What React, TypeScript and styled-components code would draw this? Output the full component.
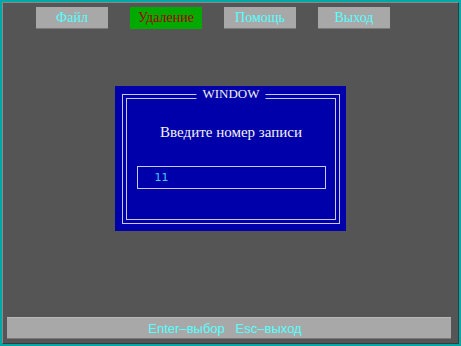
import React from "react";
import styled, { createGlobalStyle } from "styled-components";

const Global = createGlobalStyle`
  html, body {
    margin: 0;
    padding: 0;
    background: #555555;
  }
`;

const Screen = styled.div`
  box-sizing: border-box;
  width: 461px;
  height: 346px;
  border: 2px solid #00a8a8;
  background: #555555;
  display: flex;
  flex-direction: column;
  overflow: hidden;
`;

const Inner = styled.div`
  flex: 1;
  display: flex;
  flex-direction: column;
  border-top: 1px solid #8a8a8a;
  border-left: 1px solid #8a8a8a;
  border-right: 1px solid #3a3a3a;
  border-bottom: 1px solid #3a3a3a;
`;

const Menu = styled.div`
  display: flex;
  gap: 22px;
  padding: 4px 0 0 33px;
`;

const MenuItem = styled.div<{ $active?: boolean }>`
  box-sizing: border-box;
  width: 72px;
  height: 22px;
  display: flex;
  align-items: center;
  justify-content: center;
  font-family: "Liberation Serif", serif;
  font-size: 14px;
  color: ${(p) => (p.$active ? "#aa0000" : "#55ffff")};
  background: ${(p) => (p.$active ? "#00aa00" : "#a8a8a8")};
  border-bottom: ${(p) => (p.$active ? "none" : "1px solid #7a7a7a")};
`;

const Middle = styled.div`
  flex: 1;
  display: flex;
  justify-content: center;
  padding-top: 57px;
`;

const Window = styled.div`
  box-sizing: border-box;
  width: 231px;
  height: 145px;
  background: #0000aa;
  padding: 8px 6px 7px 7px;
  display: flex;
`;

const Frame = styled.div`
  position: relative;
  flex: 1;
  border: 1px solid #c8c8f0;
  padding: 3px;
  display: flex;
`;

const FrameInner = styled.div`
  flex: 1;
  border: 1px solid #c8c8f0;
  display: flex;
  flex-direction: column;
  align-items: center;
`;

const Title = styled.span`
  position: absolute;
  top: -9px;
  left: 50%;
  transform: translateX(-50%);
  background: #0000aa;
  padding: 0 6px;
  font-family: "Liberation Serif", serif;
  font-size: 13px;
  line-height: 16px;
  color: #f0f0f0;
`;

const Prompt = styled.div`
  margin-top: 25px;
  font-family: "Liberation Serif", "DejaVu Serif", serif;
  font-size: 15px;
  color: #f4f4f4;
`;

const Field = styled.div`
  box-sizing: border-box;
  margin-top: 25px;
  width: 189px;
  height: 23px;
  border: 1px solid #c8c8f0;
  padding-left: 17px;
  display: flex;
  align-items: center;
  font-family: "DejaVu Sans", sans-serif;
  font-size: 11px;
  color: #40c8f0;
`;

const StatusBar = styled.div`
  box-sizing: border-box;
  margin: 0 7px 4px 4px;
  height: 22px;
  background: #a8a8a8;
  border-top: 1px solid #b8b8b8;
  border-bottom: 1px solid #7a7a7a;
  display: flex;
  align-items: center;
  justify-content: center;
  padding-right: 8px;
  font-family: "Liberation Sans", sans-serif;
  font-size: 13px;
  color: #55ffff;
  white-space: pre;
`;

export default function App() {
  return (
    <>
      <Global />
      <Screen>
        <Inner>
          <Menu>
            <MenuItem>Файл</MenuItem>
            <MenuItem $active>Удаление</MenuItem>
            <MenuItem>Помощь</MenuItem>
            <MenuItem>Выход</MenuItem>
          </Menu>
          <Middle>
            <Window>
              <Frame>
                <Title>WINDOW</Title>
                <FrameInner>
                  <Prompt>Введите номер записи</Prompt>
                  <Field>11</Field>
                </FrameInner>
              </Frame>
            </Window>
          </Middle>
          <StatusBar>{"Enter–выбор   Esc–выход"}</StatusBar>
        </Inner>
      </Screen>
    </>
  );
}
